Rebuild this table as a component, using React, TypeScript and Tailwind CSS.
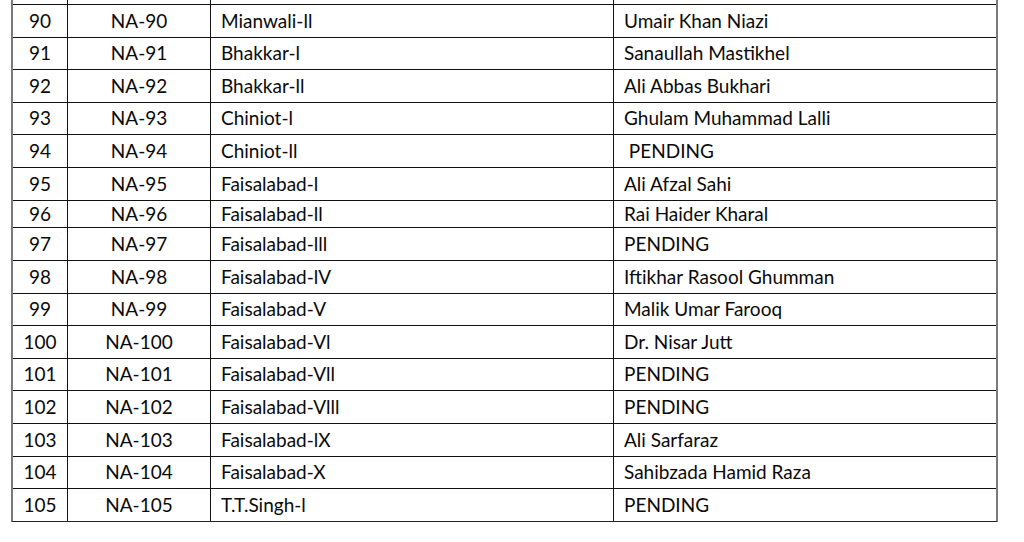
import React from 'react';

type Row = { no: string; na: string; area: string; name: string; h: number };

const rows: Row[] = [
  { no: '90', na: 'NA-90', area: 'Mianwali-ll', name: 'Umair Khan Niazi', h: 33 },
  { no: '91', na: 'NA-91', area: 'Bhakkar-l', name: 'Sanaullah Mastikhel', h: 32 },
  { no: '92', na: 'NA-92', area: 'Bhakkar-ll', name: 'Ali Abbas Bukhari', h: 33 },
  { no: '93', na: 'NA-93', area: 'Chiniot-l', name: 'Ghulam Muhammad Lalli', h: 32 },
  { no: '94', na: 'NA-94', area: 'Chiniot-ll', name: '\u00a0PENDING', h: 33 },
  { no: '95', na: 'NA-95', area: 'Faisalabad-l', name: 'Ali Afzal Sahi', h: 33 },
  { no: '96', na: 'NA-96', area: 'Faisalabad-ll', name: 'Rai Haider Kharal', h: 27 },
  { no: '97', na: 'NA-97', area: 'Faisalabad-lll', name: 'PENDING', h: 33 },
  { no: '98', na: 'NA-98', area: 'Faisalabad-lV', name: 'Iftikhar Rasool Ghumman', h: 33 },
  { no: '99', na: 'NA-99', area: 'Faisalabad-V', name: 'Malik Umar Farooq', h: 32 },
  { no: '100', na: 'NA-100', area: 'Faisalabad-Vl', name: 'Dr. Nisar Jutt', h: 33 },
  { no: '101', na: 'NA-101', area: 'Faisalabad-Vll', name: 'PENDING', h: 32 },
  { no: '102', na: 'NA-102', area: 'Faisalabad-Vlll', name: 'PENDING', h: 33 },
  { no: '103', na: 'NA-103', area: 'Faisalabad-lX', name: 'Ali Sarfaraz', h: 33 },
  { no: '104', na: 'NA-104', area: 'Faisalabad-X', name: 'Sahibzada Hamid Raza', h: 32 },
  { no: '105', na: 'NA-105', area: 'T.T.Singh-l', name: 'PENDING', h: 33 },
];

const Cells = ({ r }: { r?: Row }) => (
  <>
    <div className="w-[55px] shrink-0 h-full border-r border-[#111] flex items-center justify-center">{r?.no}</div>
    <div className="w-[143px] shrink-0 h-full border-r border-[#111] flex items-center justify-center">{r?.na}</div>
    <div className="w-[403px] shrink-0 h-full border-r border-[#111] flex items-center pl-[10px]">{r?.area}</div>
    <div className="flex-1 h-full flex items-center pl-[10px] whitespace-pre">{r?.name}</div>
  </>
);

export default function App() {
  return (
    <div className="w-[1024px] h-[542px] bg-white overflow-hidden font-['Lato','Liberation_Sans',sans-serif] text-[19px] text-[#0a0a0a]">
      <div className="ml-[11px] w-[987px] border-x-2 border-[#7a7a7a] border-b border-b-[#222]">
        {/* row cut off at the top edge */}
        <div className="h-[4px] flex">
          <Cells />
        </div>
        {rows.map(r => (
          <div
            key={r.no}
            className="flex border-t border-[#111] box-border"
            style={{ height: r.h }}
          >
            <Cells r={r} />
          </div>
        ))}
      </div>
    </div>
  );
}
